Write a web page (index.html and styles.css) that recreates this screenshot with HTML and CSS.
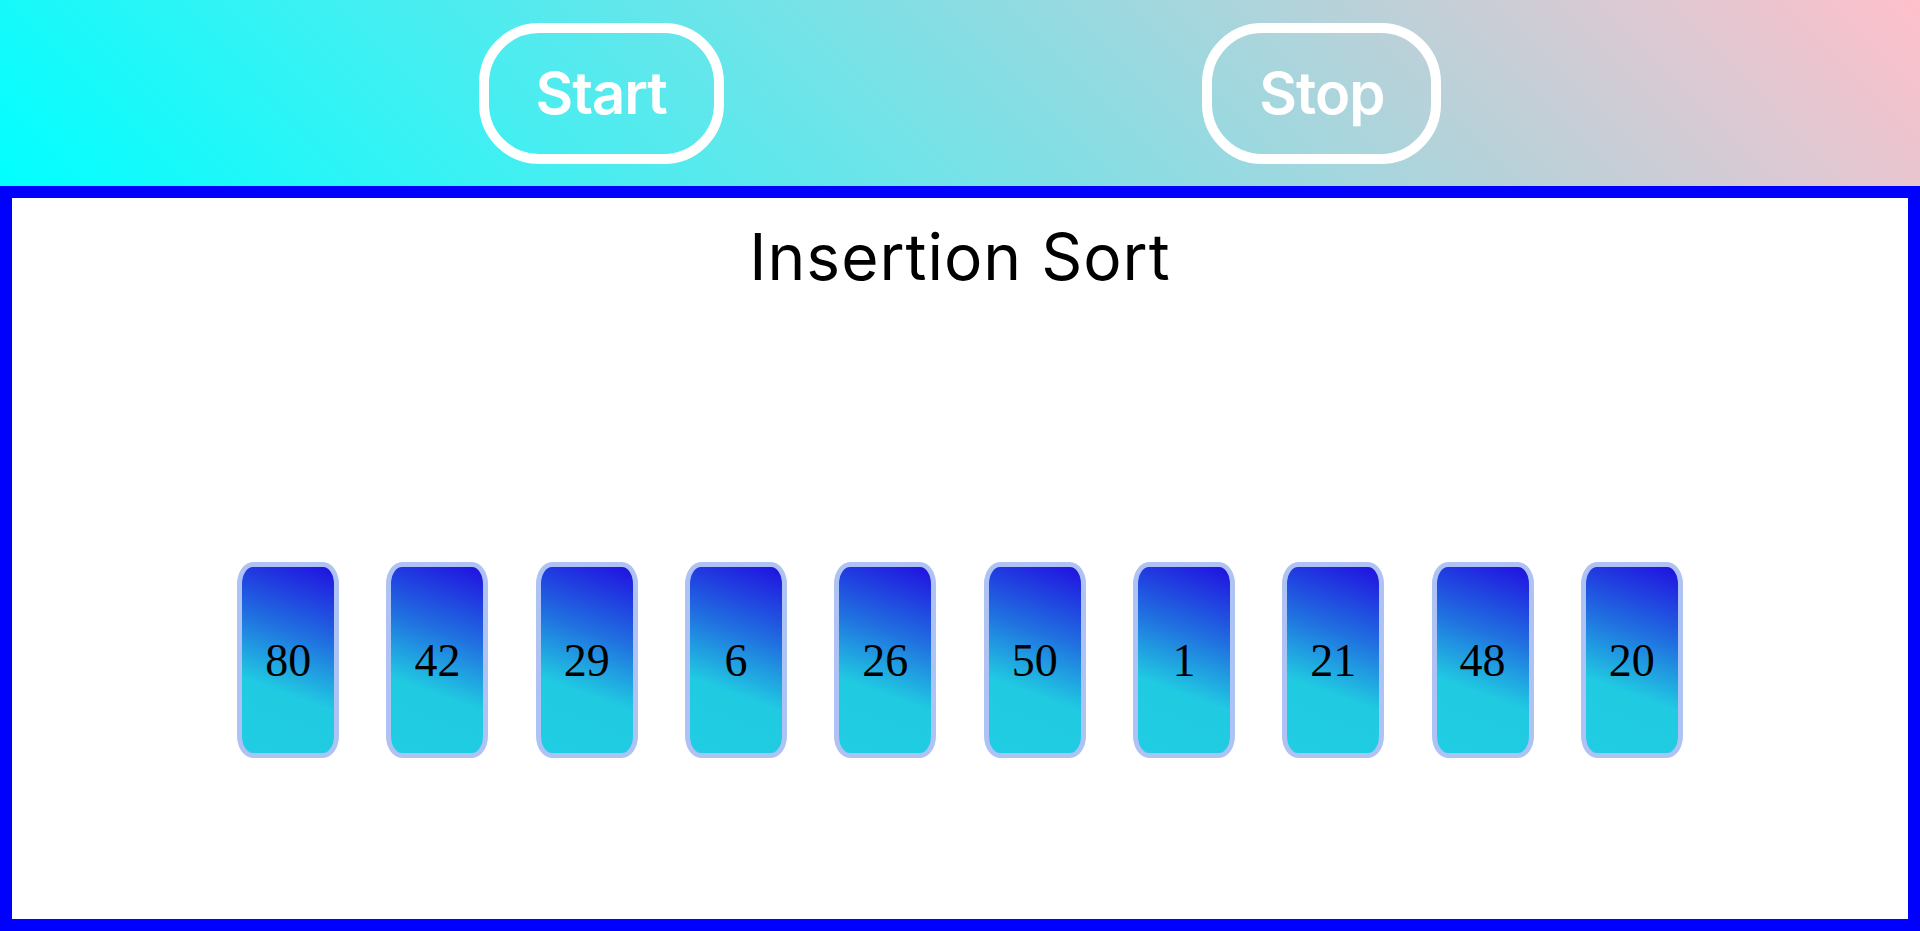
FILE: index.html
```html
<!DOCTYPE html>
<html lang="en">
<head>
<meta charset="utf-8">
<title>Insertion Sort</title>
<link rel="stylesheet" href="styles.css">
</head>
<body>
<header class="controls">
  <button class="btn">Start</button>
  <button class="btn">Stop</button>
</header>
<main class="board">
  <h1 class="title">Insertion Sort</h1>
  <div class="cards">
    <div class="card">80</div>
    <div class="card">42</div>
    <div class="card">29</div>
    <div class="card">6</div>
    <div class="card">26</div>
    <div class="card">50</div>
    <div class="card">1</div>
    <div class="card">21</div>
    <div class="card">48</div>
    <div class="card">20</div>
  </div>
</main>
</body>
</html>
```

FILE: styles.css
```css
html, body {
  margin: 0;
  padding: 0;
  overflow: hidden;
}

body {
  font-family: "Inter", "Liberation Sans", sans-serif;
}

.controls {
  height: 186px;
  display: flex;
  justify-content: space-evenly;
  align-items: center;
  background: linear-gradient(45deg, #00ffff, #ffc0cb);
}

.btn {
  box-sizing: border-box;
  height: 141px;
  padding: 0 47px;
  border: 10px solid #ffffff;
  border-radius: 60px;
  background: transparent;
  color: #ffffff;
  font-family: "Inter", "Liberation Sans", sans-serif;
  font-weight: 600;
  font-size: 58px;
  letter-spacing: -1px;
  line-height: 1;
  cursor: pointer;
}

.board {
  box-sizing: border-box;
  height: 745px;
  border: 12px solid #0000ff;
  background: #ffffff;
  display: flex;
  flex-direction: column;
  align-items: center;
}

.title {
  margin: 20px 0 0;
  height: 78px;
  font-family: "Inter", "Liberation Sans", sans-serif;
  font-weight: 400;
  font-size: 64px;
  line-height: 78px;
  letter-spacing: 1px;
  color: #000000;
}

.cards {
  margin-top: 266px;
  display: flex;
  gap: 47.3px;
}

.card {
  box-sizing: border-box;
  width: 102px;
  height: 196px;
  border: 5px solid #aec2f4;
  border-radius: 16px / 22px;
  background: linear-gradient(200deg, #2110e0 0%, #2070e0 36%, #20cbe2 66%, #20cde3 100%);
  display: flex;
  align-items: center;
  justify-content: center;
  font-family: "Liberation Serif", "Times New Roman", serif;
  font-size: 46px;
  color: #000000;
}
```
